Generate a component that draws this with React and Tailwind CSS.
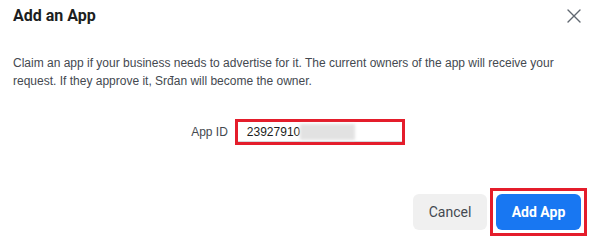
export default function App() {
  return (
    <div className="w-[596px] h-[240px] bg-white flex flex-col font-['Liberation_Sans',Arial,sans-serif]">
      {/* header */}
      <div className="h-8 flex items-center justify-between pl-[13px] pr-[15px]">
        <h1 className="font-['Roboto',sans-serif] font-bold text-[16px] text-[#1c1e21]">Add an App</h1>
        <svg width="14" height="14" viewBox="0 0 14 14" className="text-[#606770]">
          <path d="M1 1 L13 13 M13 1 L1 13" stroke="currentColor" strokeWidth="1.4" strokeLinecap="round" />
        </svg>
      </div>

      {/* body */}
      <p className="mt-[22px] px-[13px] text-[12px] leading-[18px] text-[#444950]">
        Claim an app if your business needs to advertise for it. The current owners of the app will receive your
        <br />
        request. If they approve it, Srđan will become the owner.
      </p>

      <div className="mt-[29px] flex items-center justify-center gap-[7px]">
        <label className="text-[12px] text-[#444950]">App ID</label>
        <div className="w-[170px] h-[26px] border-[3px] border-[#e41d2b]">
          <div className="h-full flex items-center pl-[9px] border-b border-[#d6d8dc]">
            <span className="text-[12px] text-[#1c1e21]">23927910</span>
            <span className="w-[55px] h-[16px] bg-[#e2e2e2] blur-[1.5px]" />
          </div>
        </div>
      </div>

      {/* footer */}
      <div className="mt-[43px] flex items-center justify-end gap-[3px] pr-[9px]">
        <button className="w-[74px] h-[36px] rounded-[6px] bg-[#f0f0f0] font-['Roboto',sans-serif] text-[14px] text-[#444950]">
          Cancel
        </button>
        <div className="border-[3px] border-[#e41d2b] p-[3px]">
          <button className="w-[85px] h-[36px] rounded-[6px] bg-[#1877f2] font-['Roboto',sans-serif] font-bold text-[14px] text-white">
            Add App
          </button>
        </div>
      </div>
    </div>
  )
}
